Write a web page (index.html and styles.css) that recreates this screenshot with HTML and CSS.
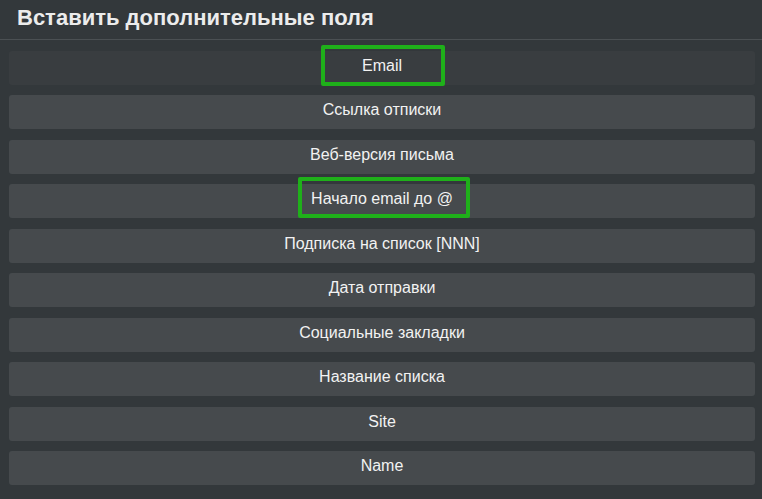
FILE: index.html
```html
<!DOCTYPE html>
<html lang="ru">
<head>
  <meta charset="UTF-8">
  <title>Вставить дополнительные поля</title>
  <link rel="stylesheet" href="styles.css">
</head>
<body>
  <div class="panel">
    <h2 class="panel-title">Вставить дополнительные поля</h2>
    <div class="field-list">
      <button class="field hovered">Email<span class="mark mark-email"></span></button>
      <button class="field">Ссылка отписки</button>
      <button class="field">Веб-версия письма</button>
      <button class="field">Начало email до @<span class="mark mark-login"></span></button>
      <button class="field">Подписка на список [NNN]</button>
      <button class="field">Дата отправки</button>
      <button class="field">Социальные закладки</button>
      <button class="field">Название списка</button>
      <button class="field">Site</button>
      <button class="field">Name</button>
    </div>
  </div>
</body>
</html>
```

FILE: styles.css
```css
body {
  margin: 0;
  background-color: #33383b;
  font-family: "Liberation Sans", Arial, sans-serif;
}

.panel {
  width: 762px;
  height: 499px;
  overflow: hidden;
}

.panel-title {
  margin: 0;
  height: 40px;
  padding: 0 17px;
  box-sizing: border-box;
  border-bottom: 1px solid #4b5053;
  color: #ececec;
  font-size: 22px;
  font-weight: bold;
  line-height: 36px;
}

.field-list {
  display: flex;
  flex-direction: column;
  gap: 10.5px;
  padding: 10.5px 7px 0 9px;
}

.field {
  position: relative;
  height: 34px;
  border: none;
  border-radius: 3px;
  background-color: #464a4d;
  color: #f2f2f2;
  font-family: inherit;
  font-size: 16px;
  padding: 0 0 4px;
  cursor: pointer;
}

.field.hovered {
  background-color: #393d40;
}

.mark {
  position: absolute;
  top: -6px;
  height: 41px;
  box-sizing: border-box;
  border: 4px solid #1fb01a;
  border-radius: 2px;
}

.mark-email {
  left: 312px;
  width: 124px;
}

.mark-login {
  left: 289px;
  width: 172px;
  top: -7px;
}
```
